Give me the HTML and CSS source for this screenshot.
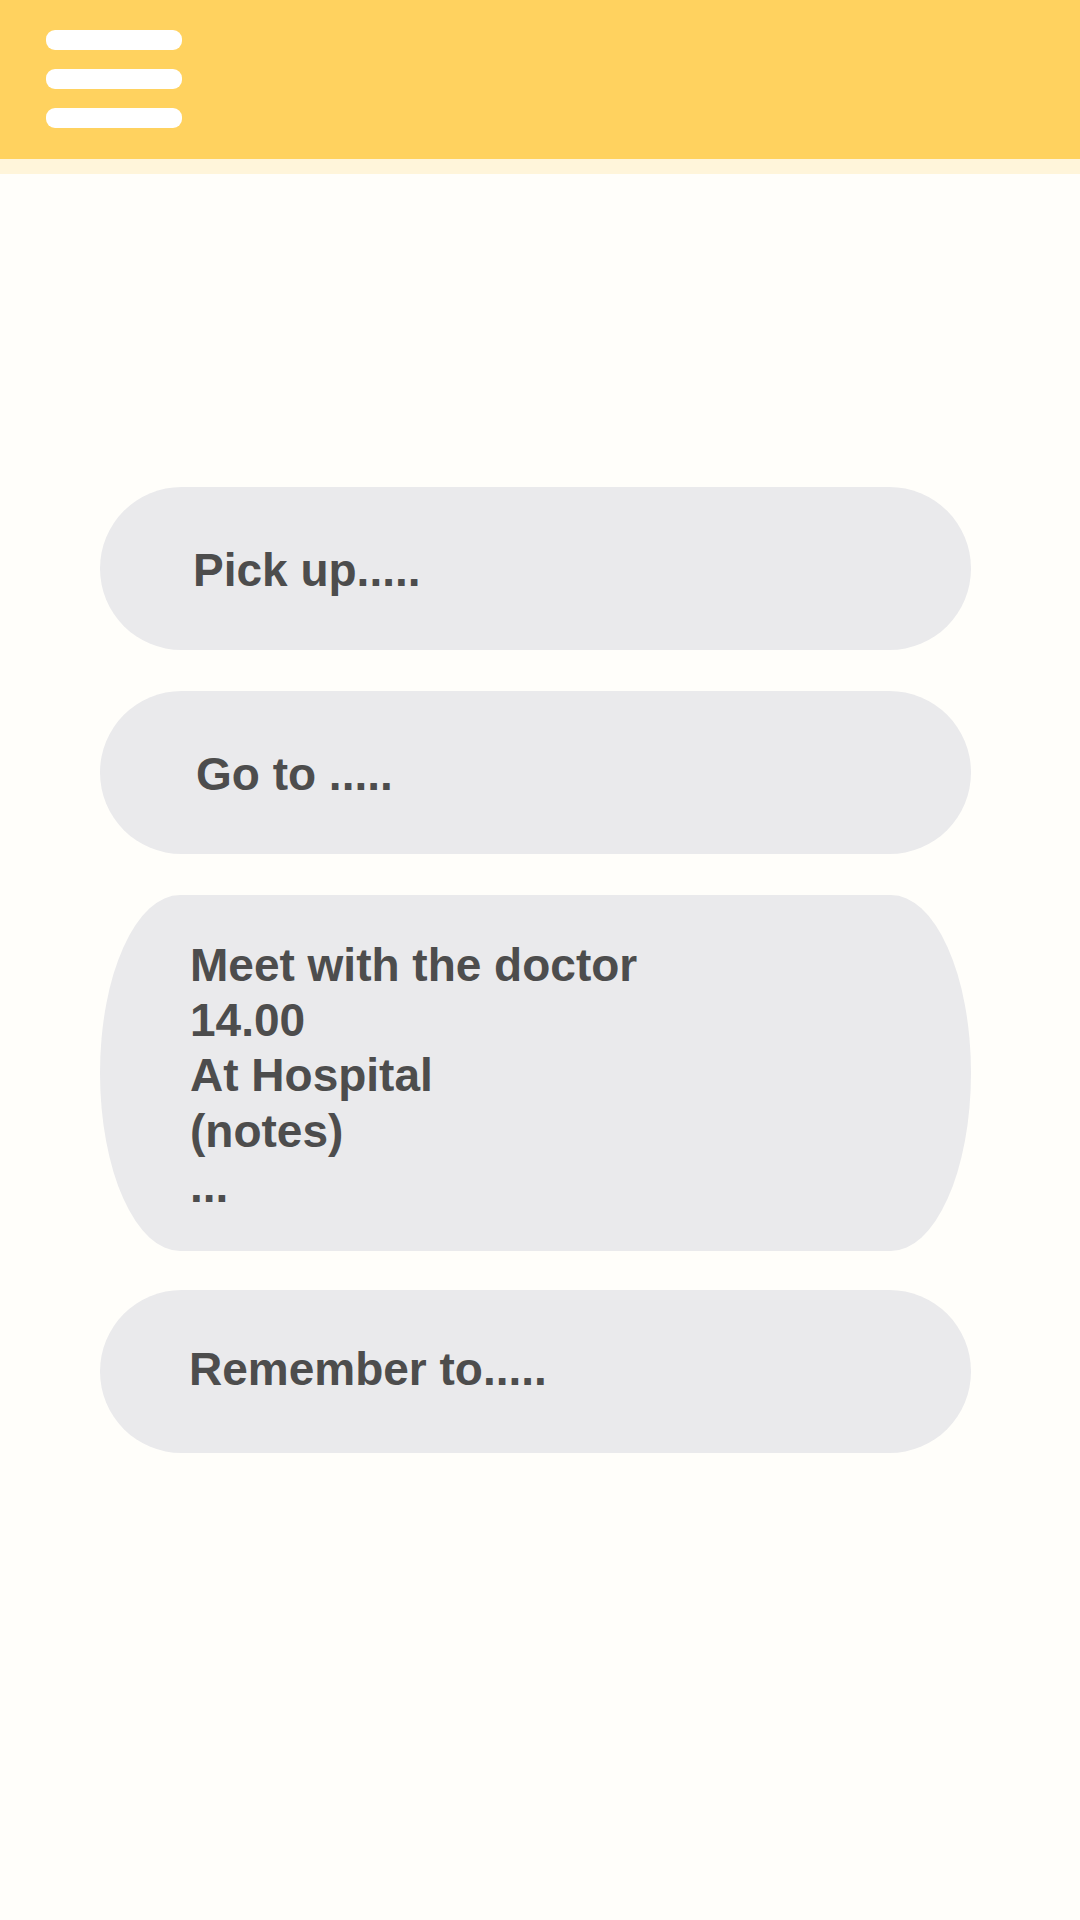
FILE: index.html
```html
<!DOCTYPE html>
<html lang="en">
<head>
<meta charset="utf-8">
<title>Notes</title>
<link rel="stylesheet" href="styles.css">
</head>
<body>
<header class="topbar">
  <button class="menu" aria-label="Menu">
    <span class="bar"></span>
    <span class="bar"></span>
    <span class="bar"></span>
  </button>
</header>
<div class="topbar-shadow"></div>
<main class="list">
  <div class="card card-pill"><p class="txt t1">Pick up.....</p></div>
  <div class="card card-pill"><p class="txt t2">Go to .....</p></div>
  <div class="card card-tall"><p class="txt t3">Meet with the doctor<br>14.00<br>At Hospital<br>(notes)<br>...</p></div>
  <div class="card card-pill"><p class="txt t4">Remember to.....</p></div>
</main>
</body>
</html>
```
FILE: styles.css
```css
html, body {
  margin: 0;
  padding: 0;
}
body {
  width: 1080px;
  height: 1920px;
  background: #fffefa;
  font-family: "Liberation Sans", Arial, sans-serif;
  overflow: hidden;
}
.topbar {
  height: 159px;
  background: #ffd25f;
  display: flex;
  align-items: flex-start;
}
.topbar-shadow {
  height: 15px;
  background: #fff5da;
}
.menu {
  margin: 30px 0 0 46px;
  padding: 0;
  border: 0;
  background: transparent;
  display: flex;
  flex-direction: column;
  gap: 19px;
}
.bar {
  display: block;
  width: 136px;
  height: 20px;
  border-radius: 9px;
  background: #ffffff;
}
.list {
  padding: 313px 0 0 100px;
  display: flex;
  flex-direction: column;
  gap: 41px;
}
.card {
  width: 871px;
  background: #eaeaec;
  box-sizing: border-box;
  display: flex;
  align-items: center;
}
.card-pill {
  height: 163px;
  border-radius: 82px;
}
.card-tall {
  height: 356px;
  border-radius: 80px / 50%;
  align-items: flex-start;
  padding-top: 43px;
}
.card-tall + .card-pill {
  margin-top: -2px;
}
.txt {
  margin: 0;
  font-size: 46px;
  font-weight: bold;
  line-height: 1.2;
  color: #4d4d4d;
}
.t1 { padding: 4px 0 0 93px; }
.t2 { padding: 4px 0 0 96px; }
.t3 { padding-left: 90px; }
.t4 { padding: 0 0 4px 89px; }
```
